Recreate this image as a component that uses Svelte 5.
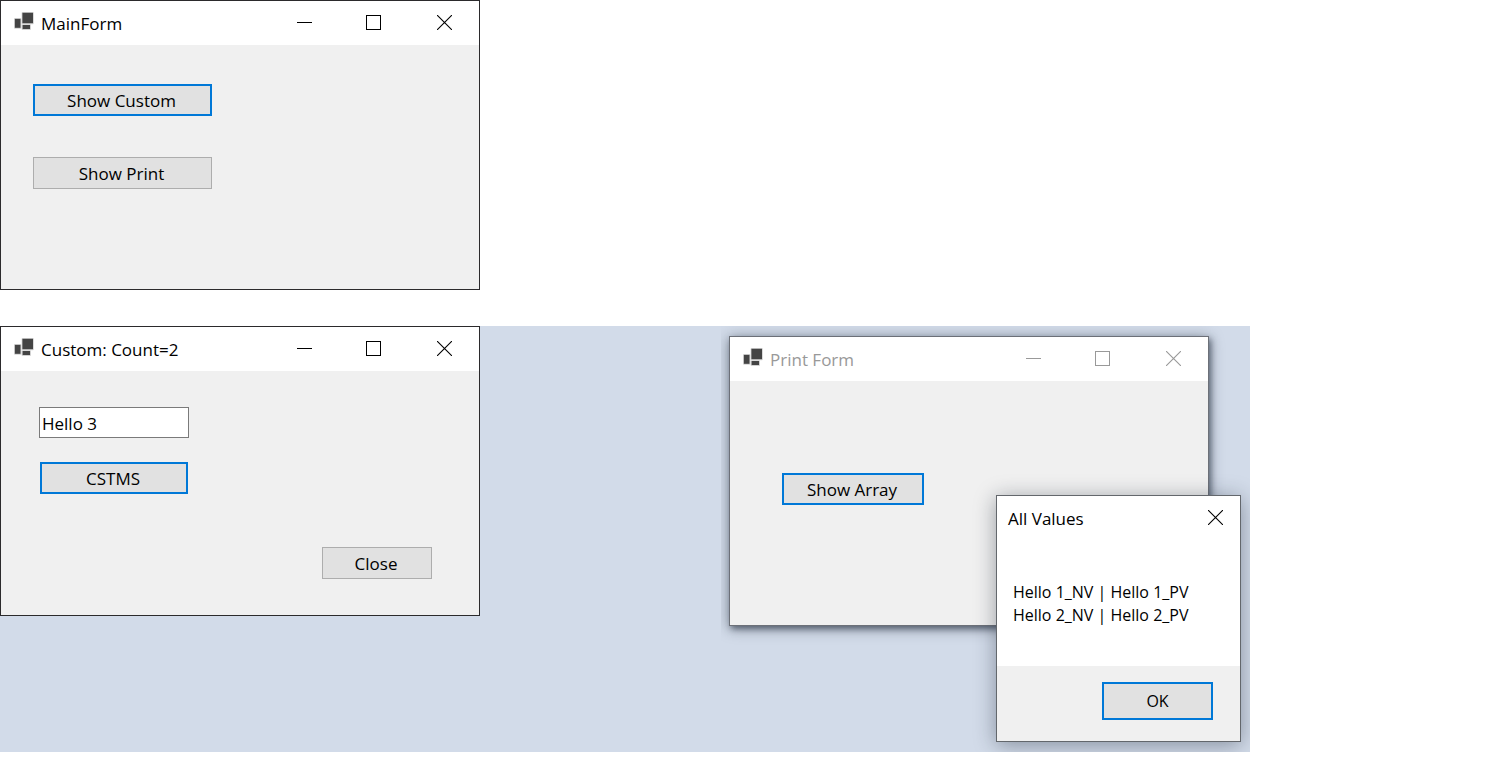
<script>
  let message = $state('Hello 3');
  const values = ['Hello 1_NV | Hello 1_PV', 'Hello 2_NV | Hello 2_PV'];
</script>

{#snippet closeGlyph()}
  <svg width="15" height="15" viewBox="0 0 15 15" aria-hidden="true">
    <path d="M0 0L15 15M15 0L0 15" fill="none" stroke="currentColor" stroke-width="1.1" />
  </svg>
{/snippet}

{#snippet titleBar(title)}
  <header class="titlebar">
    <svg class="app-icon" width="20" height="19" viewBox="0 0 20 19" aria-hidden="true">
      <g fill="#d2d2d2">
        <rect x="7.6" y="0" width="12.2" height="12.2" rx="1" />
        <rect x="0" y="6" width="7.4" height="10.8" rx="1" />
        <rect x="7.6" y="12.2" width="9.4" height="5.8" rx="1" />
      </g>
      <g fill="#444">
        <rect x="8.4" y="0.8" width="10.6" height="10.4" />
        <rect x="0.9" y="6.9" width="5.6" height="8.9" />
        <rect x="8.6" y="13" width="7.4" height="4" />
      </g>
    </svg>
    <h2>{title}</h2>
    <div class="controls">
      <button aria-label="Minimize">
        <svg width="15" height="15" viewBox="0 0 15 15" aria-hidden="true">
          <path d="M0 7.5H15" stroke="currentColor" />
        </svg>
      </button>
      <button aria-label="Maximize">
        <svg width="15" height="15" viewBox="0 0 15 15" aria-hidden="true">
          <rect x="0.5" y="0.5" width="14" height="14" fill="none" stroke="currentColor" />
        </svg>
      </button>
      <button aria-label="Close window">{@render closeGlyph()}</button>
    </div>
  </header>
{/snippet}

<main>
  <section class="window">
    {@render titleBar('MainForm')}
    <div class="body main-body">
      <button class="push default">Show Custom</button>
      <button class="push">Show Print</button>
    </div>
  </section>

  <div class="desktop">
    <div class="pane">
      <section class="window">
        {@render titleBar('Custom: Count=2')}
        <div class="body custom-body">
          <input type="text" aria-label="Message" bind:value={message} />
          <button class="push default cstms">CSTMS</button>
          <button class="push close">Close</button>
        </div>
      </section>
    </div>

    <div class="pane print-pane">
      <section class="window inactive print-form">
        {@render titleBar('Print Form')}
        <div class="body print-body">
          <button class="push default">Show Array</button>
        </div>
      </section>

      <div class="dialog" role="dialog" aria-label="All Values">
        <header>
          <h2>All Values</h2>
          <button aria-label="Close dialog">{@render closeGlyph()}</button>
        </header>
        <div class="values">
          {#each values as value}
            <p>{value}</p>
          {/each}
        </div>
        <footer>
          <button class="push default ok">OK</button>
        </footer>
      </div>
    </div>
  </div>
</main>

<style>
  :global(body) {
    background: #fff;
  }

  main {
    display: flex;
    flex-direction: column;
    align-items: flex-start;
    gap: 36px;
    font-family: 'Open Sans', 'Noto Sans', sans-serif;
    font-size: 17px;
    line-height: 24px;
    color: #000;
  }

  main * {
    box-sizing: border-box;
  }

  h2,
  p {
    margin: 0;
    font-size: inherit;
    font-weight: 400;
  }

  button,
  input {
    font: inherit;
    color: inherit;
  }

  .window {
    display: flex;
    flex-direction: column;
    width: 480px;
    min-height: 290px;
    border: 1px solid #2b2a2c;
    background: #f0f0f0;
  }

  .titlebar {
    display: flex;
    align-items: center;
    height: 44px;
    padding-left: 13px;
    background: #fff;
  }

  .titlebar h2 {
    flex: 1;
    padding: 2px 0 0 7px;
  }

  .app-icon {
    margin-bottom: 4px;
  }

  .controls {
    display: grid;
    grid-template-columns: 69px 71px 70px;
    height: 44px;
  }

  .controls button {
    display: flex;
    padding: 14px 0 0 28px;
    border: 0;
    background: none;
  }

  .inactive {
    border-color: #6c7078;
    box-shadow:
      2px 3px 6px rgba(20, 30, 45, 0.5),
      0 2px 14px rgba(20, 30, 45, 0.4);
  }

  .inactive .titlebar {
    color: #999;
  }

  .body {
    flex: 1;
    display: flex;
    flex-direction: column;
    align-items: flex-start;
  }

  .main-body {
    gap: 41px;
    padding: 39px 32px;
  }

  .main-body .push {
    width: 179px;
  }

  .push {
    height: 32px;
    padding: 2px 2px 0 0;
    border: 1px solid #adadad;
    background: #e1e1e1;
    text-align: center;
  }

  .push.default {
    border: 2px solid #0078d7;
  }

  .custom-body {
    padding: 36px 47px 36px 38px;
  }

  input {
    width: 150px;
    height: 31px;
    padding: 1px 2px 0;
    border: 1px solid #7a7a7a;
    background: #fff;
  }

  .cstms {
    width: 148px;
    margin: 24px 0 0 1px;
  }

  .close {
    width: 110px;
    margin-top: auto;
    align-self: flex-end;
  }

  .desktop {
    display: flex;
    height: 426px;
    background: #d2dbe9;
  }

  .pane {
    width: 721px;
  }

  .print-pane {
    position: relative;
    width: 529px;
    overflow: hidden;
  }

  .print-form {
    position: absolute;
    left: 8px;
    top: 10px;
  }

  .print-body {
    padding: 92px 52px;
  }

  .print-body .push {
    width: 142px;
  }

  .dialog {
    position: absolute;
    left: 275px;
    top: 169px;
    display: flex;
    flex-direction: column;
    width: 245px;
    height: 247px;
    border: 1px solid #63676c;
    background: #fff;
    box-shadow: 0 3px 20px rgba(20, 30, 45, 0.4);
  }

  .dialog header {
    display: flex;
    align-items: flex-start;
    justify-content: space-between;
    padding: 11px 17px 0 11px;
  }

  .dialog header button {
    display: flex;
    padding: 3px 0;
    border: 0;
    background: none;
  }

  .values {
    flex: 1;
    padding: 50px 16px 0;
    font-size: 16px;
    line-height: 23px;
    white-space: nowrap;
  }

  .dialog footer {
    display: flex;
    justify-content: flex-end;
    height: 75px;
    padding: 16px 27px;
    background: #f0f0f0;
    font-size: 16px;
  }

  .ok {
    width: 111px;
    height: 38px;
    padding: 0;
  }
</style>
